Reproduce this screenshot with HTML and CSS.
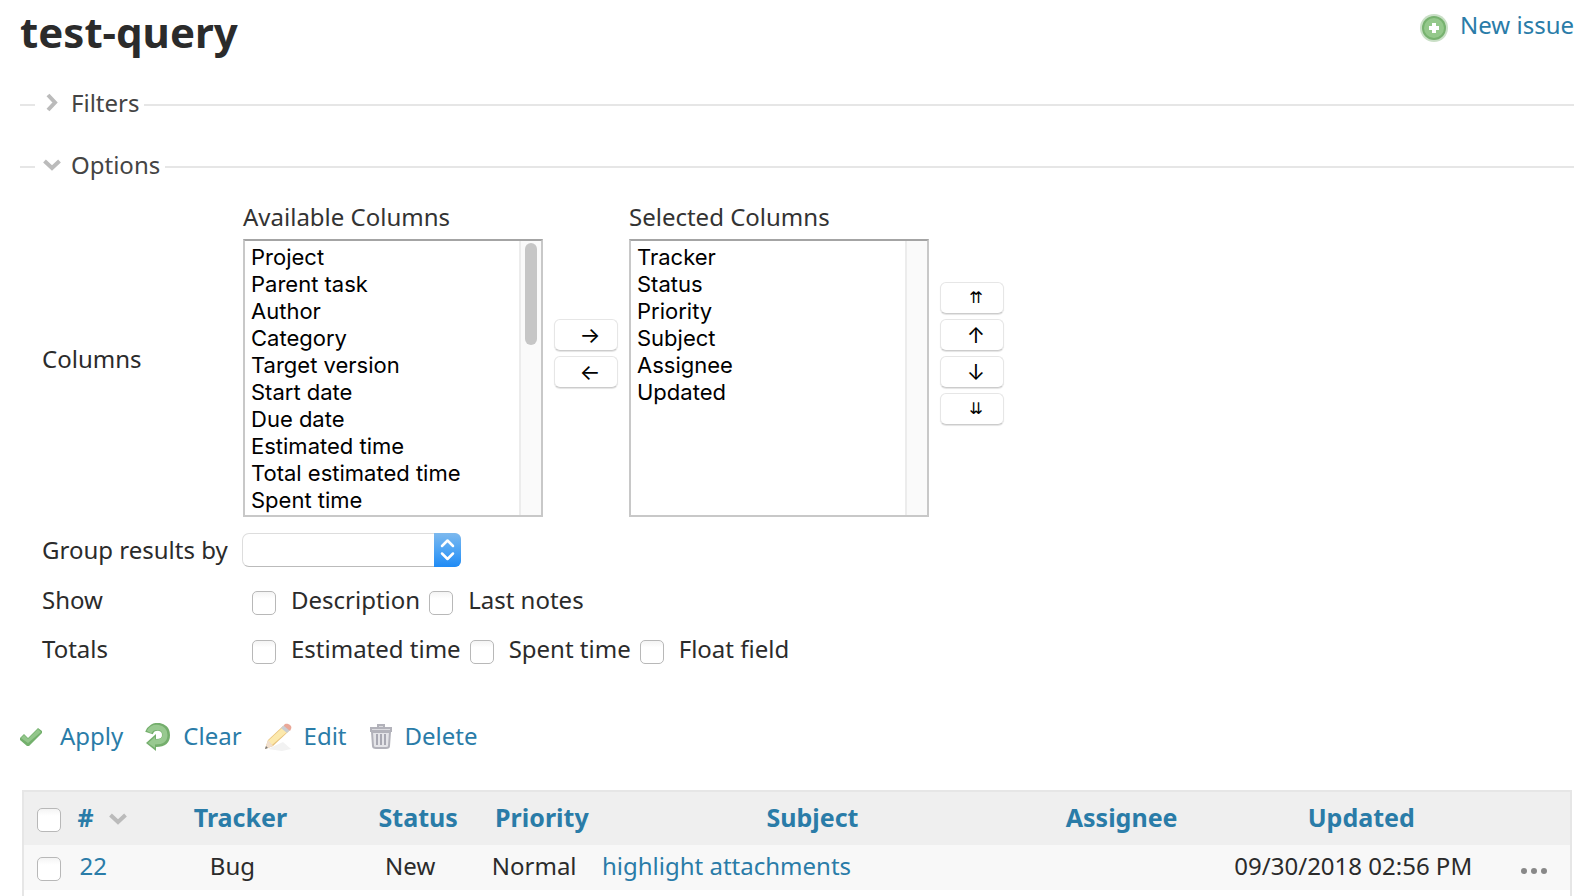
FILE: index.html
```
<!DOCTYPE html>
<html lang="en">
<head>
    <meta charset="utf-8">
    <title>test-query</title>
    <link rel="stylesheet" href="styles.css">
</head>
<body>
<div class="header">
    <h2>test-query</h2>
    <a class="new-issue" href="#">
        <svg width="28" height="28" viewBox="0 0 28 28">
            <circle cx="14" cy="14" r="14" fill="#c9dfc6"/>
            <circle cx="14" cy="14" r="12" fill="#77b26f"/>
            <circle cx="14" cy="14" r="10" fill="#94c88b"/>
            <path d="M14 9v10M9 14h10" stroke="#fff" stroke-width="4"/>
        </svg>
        New issue
    </a>
</div>
<form>
    <fieldset>
        <legend>
            <button type="button" class="toggle">
                <svg width="18" height="20" viewBox="0 0 18 20"><path d="M5 2l7 7.500-7 7.500" fill="none" stroke="#bbb" stroke-width="4"/></svg>
                Filters
            </button>
        </legend>
    </fieldset>
    <fieldset>
        <legend>
            <button type="button" class="toggle">
                <svg width="18" height="20" viewBox="0 0 18 20"><path d="M1.500 6l7.500 7 7.500-7" fill="none" stroke="#bbb" stroke-width="4"/></svg>
                Options
            </button>
        </legend>
        <div class="options">
            <div class="field">
                <span class="name">Columns</span>
                <div class="columns">
                    <div class="list">
                        <label for="available">Available Columns</label>
                        <div class="box">
                            <select id="available" multiple size="10">
                                <option>Project</option>
                                <option>Parent task</option>
                                <option>Author</option>
                                <option>Category</option>
                                <option>Target version</option>
                                <option>Start date</option>
                                <option>Due date</option>
                                <option>Estimated time</option>
                                <option>Total estimated time</option>
                                <option>Spent time</option>
                            </select>
                            <div class="scrollbar"><div class="thumb"></div></div>
                        </div>
                    </div>
                    <div class="buttons">
                        <button type="button">→</button>
                        <button type="button">←</button>
                    </div>
                    <div class="list">
                        <label for="selected">Selected Columns</label>
                        <div class="box">
                            <select id="selected" multiple size="10">
                                <option>Tracker</option>
                                <option>Status</option>
                                <option>Priority</option>
                                <option>Subject</option>
                                <option>Assignee</option>
                                <option>Updated</option>
                            </select>
                            <div class="scrollbar"></div>
                        </div>
                    </div>
                    <div class="buttons">
                        <button type="button" class="double">⇈</button>
                        <button type="button">↑</button>
                        <button type="button">↓</button>
                        <button type="button" class="double">⇊</button>
                    </div>
                </div>
            </div>
            <div class="field">
                <label class="name" for="group_by">Group results by</label>
                <div class="group-by">
                    <select id="group_by">
                        <option></option>
                    </select>
                    <svg class="arrows" width="27" height="34" viewBox="0 0 27 34">
                        <path d="M8 13l5.500-5.500L19 13M8 20.500l5.500 5.500 5.500-5.500" fill="none" stroke="#fff" stroke-width="2.500" stroke-linecap="round" stroke-linejoin="round"/>
                    </svg>
                </div>
            </div>
            <div class="field">
                <span class="name">Show</span>
                <div class="checks">
                    <label><input type="checkbox">Description</label>
                    <label><input type="checkbox">Last notes</label>
                </div>
            </div>
            <div class="field">
                <span class="name">Totals</span>
                <div class="checks">
                    <label><input type="checkbox">Estimated time</label>
                    <label><input type="checkbox">Spent time</label>
                    <label><input type="checkbox">Float field</label>
                </div>
            </div>
        </div>
    </fieldset>
    <p class="actions">
        <a href="#">
            <svg width="28" height="28" viewBox="0 0 28 28">
                <path d="M0 15l4-4 4 4L18 5l4 3v2L9 23H7L0 17z" fill="#73b06c"/>
                <path d="M1 15l3-3 4 4L18 6l3 3L8 20z" fill="#93c68b"/>
            </svg>
            Apply
        </a>
        <a href="#">
            <svg width="26" height="28" viewBox="0 0 26 28">
                <path d="M4 10C7 1 21 2 21 12c0 6-4 8-10 8" fill="none" stroke="#74ae6c" stroke-width="8"/>
                <path d="M1 20l10-9v17z" fill="#74ae6c"/>
                <path d="M4 9C8 2 20 3 20 12c0 5-4 7-10 7" fill="none" stroke="#98c990" stroke-width="5"/>
                <path d="M3 20l7-6v11z" fill="#98c990"/>
            </svg>
            Clear
        </a>
        <a href="#">
            <svg width="28" height="28" viewBox="0 0 28 28">
                <path d="M4 26l15-7 8 7-9 2z" fill="#f2f2f2"/>
                <path d="M1 26l3-9L19 3l6 5L9 23z" fill="#e8c27c"/>
                <path d="M4 18L18 5l5 4L8 22z" fill="#fce9ad"/>
                <path d="M1 26l3-9 5 6z" fill="#f1dfcd"/>
                <path d="M1 26l1-3 2 2z" fill="#777"/>
                <path d="M17 5l3-3 6 5-3 3z" fill="#c9ced3"/>
                <path d="M20 2c2-3 9 0 7 4l-1 2-6-5z" fill="#eaa898"/>
            </svg>
            Edit
        </a>
        <a href="#">
            <svg width="24" height="28" viewBox="0 0 24 28">
                <path d="M3 9l1 14c0 1 1 2 3 2h10c2 0 3-1 3-2l1-14z" fill="#e4e4e8" stroke="#b2b2ba" stroke-width="2"/>
                <path d="M2 5h20v3H2zM9 4V2h6v2" fill="#dcdce0" stroke="#b2b2ba" stroke-width="2"/>
                <path d="M8 11v11M12 11v11M16 11v11" stroke="#a8a8b2" stroke-width="2"/>
            </svg>
            Delete
        </a>
    </p>
</form>
<div class="issues">
    <table>
        <colgroup>
            <col class="c-check"><col class="c-id"><col class="c-tracker"><col class="c-status"><col class="c-priority">
            <col class="c-subject"><col class="c-assignee"><col class="c-updated"><col class="c-menu">
        </colgroup>
        <thead>
        <tr>
            <th class="check"><input type="checkbox" aria-label="Check all"></th>
            <th class="id"><a href="#"># <svg width="18" height="20" viewBox="0 0 18 20"><path d="M1.500 8l7.500 7 7.500-7" fill="none" stroke="#bbb" stroke-width="4"/></svg></a></th>
            <th><a href="#">Tracker</a></th>
            <th><a href="#">Status</a></th>
            <th><a href="#">Priority</a></th>
            <th><a href="#">Subject</a></th>
            <th><a href="#">Assignee</a></th>
            <th><a href="#">Updated</a></th>
            <th></th>
        </tr>
        </thead>
        <tbody>
        <tr>
            <td class="check"><input type="checkbox" aria-label="Issue 22"></td>
            <td><a href="#">22</a></td>
            <td>Bug</td>
            <td>New</td>
            <td>Normal</td>
            <td class="subject"><a href="#">highlight attachments</a></td>
            <td></td>
            <td>09/30/2018 02:56 PM</td>
            <td class="menu">
                <button type="button" aria-label="Actions">
                    <svg width="28" height="8" viewBox="0 0 28 8" fill="#888"><circle cx="4" cy="4" r="3"/><circle cx="14" cy="4" r="3"/><circle cx="24" cy="4" r="3"/></svg>
                </button>
            </td>
        </tr>
        </tbody>
    </table>
</div>
</body>
</html>
```
FILE: styles.css
```
* {
    box-sizing: border-box;
}
body {
    margin: 0;
    padding: 8px 11px 0 20px;
    background: #fff;
    color: #2b2b2b;
    font-family: "Noto Sans", sans-serif;
    font-size: 24px;
    line-height: 32px;
}
a {
    color: #2a7ca8;
    text-decoration: none;
}
svg {
    flex: none;
}
.header {
    display: flex;
    justify-content: space-between;
    align-items: flex-start;
}
h2 {
    margin: 0 0 31px;
    font-size: 42px;
    line-height: 48px;
}
.new-issue {
    display: flex;
    align-items: center;
    gap: 12px;
}
.new-issue svg {
    margin-top: 6px;
}

/* collapsible fieldsets */
fieldset {
    margin: 0 0 26px;
    padding: 0 0 0 15px;
    border: 0;
    border-top: 2px solid #e6e6e6;
    min-width: 0;
}
legend {
    padding: 0 5px 4px 8px;
}
.toggle {
    display: flex;
    align-items: center;
    gap: 10px;
    padding: 0;
    border: 0;
    background: none;
    color: #444;
    font: inherit;
}
.options {
    display: flex;
    flex-direction: column;
    gap: 16px;
    padding: 16px 0 0 7px;
}
.field {
    display: grid;
    grid-template-columns: 200px 1fr;
    align-items: center;
    min-height: 33px;
}
.columns {
    display: flex;
    align-items: center;
    gap: 11px;
    padding-left: 1px;
}
.list {
    display: flex;
    flex-direction: column;
    gap: 6px;
    width: 300px;
}
.list label {
    color: #333;
}
.box {
    display: grid;
}
.box select {
    grid-area: 1 / 1;
    height: 278px;
    padding: 3px 0;
    border: 2px solid #c8c8c8;
    border-top-color: #a4a4a4;
    border-radius: 0;
    background: #fff;
    color: #000;
    font-family: Inter, sans-serif;
    font-size: 22px;
    overflow: hidden;
}
.box option {
    min-height: 27px;
    padding: 0 6px;
    line-height: 27px;
}
.scrollbar {
    grid-area: 1 / 1;
    justify-self: end;
    width: 22px;
    margin: 2px;
    padding: 2px 4px;
    border-left: 2px solid #ececec;
    background: #fafafa;
}
.thumb {
    width: 12px;
    height: 102px;
    border-radius: 6px;
    background: #c6c6c6;
}
.buttons {
    display: flex;
    flex-direction: column;
    gap: 5px;
    padding-bottom: 12px;
}
.buttons button {
    width: 64px;
    height: 32px;
    padding: 0 0 0 8px;
    border: 1px solid #e6e6e6;
    border-bottom-color: #ccc;
    border-radius: 6px;
    background: #fff;
    box-shadow: 0 1px 1px #e4e4e4;
    color: #000;
    font-family: Inter, sans-serif;
    font-size: 22px;
    line-height: 28px;
}
.buttons .double {
    font-family: "DejaVu Sans", sans-serif;
    font-size: 16px;
}
.group-by {
    display: grid;
    width: 219px;
}
.group-by select {
    grid-area: 1 / 1;
    height: 34px;
    border: 1px solid #ddd;
    border-bottom-color: #bbb;
    border-radius: 7px;
    background: #fff;
    appearance: none;
    font: inherit;
}
.group-by .arrows {
    grid-area: 1 / 1;
    justify-self: end;
    border-radius: 0 6px 6px 0;
    background: linear-gradient(#7db9ee, #4ea4f4 50%, #1f8bf5);
    pointer-events: none;
}
.checks {
    display: flex;
    gap: 9px;
    padding-left: 10px;
}
.checks label {
    display: flex;
    align-items: center;
    gap: 15px;
}
input[type="checkbox"] {
    appearance: none;
    width: 24px;
    height: 24px;
    margin: 6px 0 0;
    border: 1px solid #b8b8b8;
    border-radius: 5px;
    background: linear-gradient(#f4f4f4, #fff 30%);
}

.actions {
    display: flex;
    gap: 22px;
    margin: 55px 0 38px;
}
.actions a {
    display: flex;
    align-items: center;
    gap: 12px;
}
.actions svg {
    margin-top: 2px;
}

/* issue list */
.issues {
    margin: 0 2px;
    padding-bottom: 6px;
    border: 2px solid #e6e6e6;
    border-bottom: 0;
}
table {
    width: 100%;
    table-layout: fixed;
    border-collapse: collapse;
}
.c-check { width: 3%; }
.c-id { width: 4%; }
.c-tracker { width: 14%; }
.c-status { width: 9%; }
.c-priority { width: 7%; }
.c-subject { width: 28%; }
.c-assignee { width: 12%; }
.c-updated { width: 19%; }
.c-menu { width: 4%; }
th {
    height: 53px;
    padding: 9px 4px 12px;
    background: #efefef;
    font-size: 25px;
    white-space: nowrap;
}
td {
    height: 45px;
    padding: 5px 20px 8px 4px;
    background: #f8f8f8;
    text-align: center;
    white-space: nowrap;
}
.id {
    text-align: left;
}
.id a {
    display: flex;
    align-items: center;
    gap: 15px;
    padding-left: 3px;
}
.check {
    padding-left: 8px;
    padding-right: 4px;
}
.check input[type="checkbox"] {
    display: block;
    margin: 6px auto 0;
}
.subject {
    padding-left: 6px;
    text-align: left;
}
.menu {
    padding: 6px 14px 0 4px;
}
.menu button {
    display: block;
    margin: auto;
    padding: 0;
    border: 0;
    background: none;
    line-height: 1;
}
```
